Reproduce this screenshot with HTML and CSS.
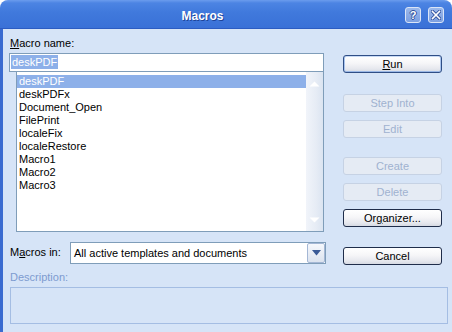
FILE: index.html
```html
<!DOCTYPE html>
<html>
<head>
<meta charset="utf-8">
<link rel="stylesheet" href="styles.css">
</head>
<body>
<div class="window">
  <div class="titlebar">
    <div class="title">Macros</div>
    <div class="tbtns">
      <span class="tbtn help">?</span>
      <span class="tbtn close"><svg width="10" height="10" viewBox="0 0 10 10"><path d="M1.5 1.5 L8.5 8.5 M8.5 1.5 L1.5 8.5" stroke="#2e4f9a" stroke-width="3.2" stroke-linecap="square"/><path d="M1.5 1.5 L8.5 8.5 M8.5 1.5 L1.5 8.5" stroke="#ffffff" stroke-width="1.6" stroke-linecap="square"/></svg></span>
    </div>
  </div>
  <div class="body">
    <div class="top">
      <div class="left">
        <div class="label"><u>M</u>acro name:</div>
        <div class="input"><span class="sel">deskPDF</span></div>
        <div class="list">
          <div class="items">
            <div class="item on">deskPDF</div>
            <div class="item">deskPDFx</div>
            <div class="item">Document_Open</div>
            <div class="item">FilePrint</div>
            <div class="item">localeFix</div>
            <div class="item">localeRestore</div>
            <div class="item">Macro1</div>
            <div class="item">Macro2</div>
            <div class="item">Macro3</div>
          </div>
          <div class="vscroll">
            <svg width="11" height="6" viewBox="0 0 11 6"><path d="M0.5 5.5 L5.5 0.5 L10.5 5.5 Z" fill="#ffffff"/></svg>
            <svg width="11" height="6" viewBox="0 0 11 6"><path d="M0.5 0.5 L5.5 5.5 L10.5 0.5 Z" fill="#ffffff"/></svg>
          </div>
        </div>
      </div>
      <div class="right">
        <button class="btn default run"><u>R</u>un</button>
        <button class="btn off step">Step Into</button>
        <button class="btn off edit">Edit</button>
        <button class="btn off create">Create</button>
        <button class="btn off delete">Delete</button>
        <button class="btn org">Or<u>g</u>anizer...</button>
      </div>
    </div>
    <div class="inrow">
      <div class="label inlabel">M<u>a</u>cros in:</div>
      <div class="select">
        <span class="seltext">All active templates and documents</span>
        <span class="dd"><svg width="9" height="6" viewBox="0 0 9 6"><path d="M0 0 L9 0 L4.5 5.5 Z" fill="#3a5a96"/></svg></span>
      </div>
      <button class="btn cancel">Cancel</button>
    </div>
    <div class="label desc">Description:</div>
    <div class="descbox"></div>
  </div>
</div>
</body>
</html>
```
FILE: styles.css
```css
html, body {
  margin: 0;
  padding: 0;
  background: #ffffff;
}
body {
  font-family: "Liberation Sans", Arial, sans-serif;
  font-size: 11px;
  color: #000;
}
.window {
  width: 452px;
  height: 332px;
  display: flex;
  flex-direction: column;
  border-radius: 8px 8px 0 0;
  overflow: hidden;
  background: #d6e4f7;
}
.titlebar {
  height: 28px;
  flex: none;
  display: flex;
  align-items: center;
  padding-right: 8px;
  border-bottom: 1px solid #2c5cc2;
  background: linear-gradient(to bottom, #6b9ced 0, #4c84e3 3px, #4079dc 45%, #3a71d7 100%);
}
.title {
  flex: 1;
  text-align: center;
  color: #ffffff;
  font-weight: bold;
  font-size: 12px;
  padding-top: 3px;
  text-shadow: 1px 1px 0 #1d4398;
}
.tbtns {
  display: flex;
  gap: 7px;
  margin-top: 1px;
}
.tbtn {
  width: 16px;
  height: 16px;
  box-sizing: border-box;
  border: 1px solid #dbe5f7;
  border-radius: 3px;
  background: linear-gradient(to bottom, #9ab8ec, #7c9fe0);
  display: flex;
  align-items: center;
  justify-content: center;
}
.help {
  color: #ffffff;
  font-weight: bold;
  font-size: 11px;
  line-height: 14px;
  text-shadow: 1px 0 0 #2e4f9a, -1px 0 0 #2e4f9a, 0 1px 0 #2e4f9a, 0 -1px 0 #2e4f9a;
}
.body {
  flex: 1;
  border-left: 3px solid #3a6bd0;
  padding: 8px 0 0 6px;
  display: flex;
  flex-direction: column;
}
.top {
  display: flex;
  gap: 17px;
}
.left {
  width: 317px;
}
.label {
  height: 13px;
  line-height: 13px;
  padding-left: 1px;
}
.input {
  margin-top: 3px;
  width: 315px;
  height: 19px;
  box-sizing: border-box;
  border: 1px solid #7f9db9;
  background: #ffffff;
  padding: 1px 0 0 1px;
}
.sel {
  display: inline-block;
  height: 14px;
  line-height: 14px;
  padding: 0 1px;
  background: #8db0e9;
  color: #ffffff;
}
.list {
  margin-left: 7px;
  width: 308px;
  height: 160px;
  box-sizing: border-box;
  border: 1px solid #7f9db9;
  border-top: none;
  background: #ffffff;
  display: flex;
}
.items {
  flex: 1;
  padding-top: 3px;
}
.item {
  height: 13px;
  line-height: 13px;
  padding-left: 2px;
}
.item.on {
  background: #8db0e9;
  color: #ffffff;
}
.vscroll {
  width: 17px;
  background: linear-gradient(to right, #f1f4fa, #e6ecf5 60%, #dbe4f1);
  display: flex;
  flex-direction: column;
  justify-content: space-between;
  align-items: center;
  padding: 9px 0 8px;
  box-sizing: border-box;
}
.right {
  width: 99px;
  display: flex;
  flex-direction: column;
  padding-top: 18px;
}
.btn {
  width: 99px;
  height: 18px;
  box-sizing: border-box;
  padding: 0;
  margin: 0;
  font-family: "Liberation Sans", Arial, sans-serif;
  font-size: 11px;
  line-height: 16px;
  color: #000;
  border: 1px solid #1f2d4a;
  border-radius: 3px;
  background: linear-gradient(to bottom, #ffffff 0, #f6f6f8 45%, #e6e8ee 80%, #d6dae3 100%);
  text-align: center;
}
.btn.default {
  border-color: #2f4e86;
  box-shadow: inset 1px 0 0 #a9c4ee, inset -1px 0 0 #a9c4ee, inset 0 1px 0 #c8daf5, inset 0 -1px 0 #9bb8e6;
}
.btn.off {
  border-color: #c6d2e4;
  background: #e5ebf4;
  color: #a0b2d0;
}
.step { margin-top: 21px; }
.edit { margin-top: 8px; }
.create { margin-top: 19px; }
.delete { margin-top: 8px; }
.org { margin-top: 8px; }
.inrow {
  display: flex;
  align-items: flex-start;
  margin-top: 10px;
}
.inlabel {
  width: 60px;
  height: 21px;
  line-height: 21px;
}
.select {
  width: 256px;
  height: 22px;
  box-sizing: border-box;
  border: 1px solid #7f9db9;
  background: #ffffff;
  display: flex;
  align-items: center;
  padding-left: 3px;
}
.seltext {
  flex: 1;
}
.dd {
  width: 18px;
  align-self: stretch;
  box-sizing: border-box;
  border: 1px solid #a4b7d5;
  border-radius: 2px;
  background: linear-gradient(to bottom, #f6f8fc, #dbe3ef);
  display: flex;
  align-items: center;
  justify-content: center;
}
.cancel {
  margin-left: 17px;
  margin-top: 5px;
}
.desc {
  margin-top: 6px;
  color: #7d9bd0;
}
.descbox {
  margin-top: 3px;
  margin-left: 1px;
  width: 438px;
  height: 37px;
  box-sizing: border-box;
  border: 1px solid #a4bde3;
}
```
